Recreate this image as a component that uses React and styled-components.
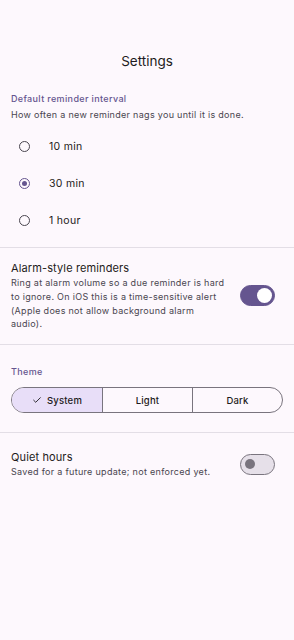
import React, { useState } from 'react'
import styled, { createGlobalStyle } from 'styled-components'

const GlobalStyle = createGlobalStyle`
  html, body {
    margin: 0;
    padding: 0;
    background: #fdf8fd;
  }
  body {
    font-family: Inter, "Liberation Sans", sans-serif;
    color: #1d1b20;
  }
`

const intervals = ['10 min', '30 min', '1 hour']
const themes = ['System', 'Light', 'Dark']

const App = () => {
  const [interval, setInterval] = useState('30 min')
  const [alarm, setAlarm] = useState(true)
  const [theme, setTheme] = useState('System')
  const [quiet, setQuiet] = useState(false)

  return (
    <Page>
      <GlobalStyle />
      <Header>Settings</Header>

      <Section $top={6} $bottom={8}>
        <SectionLabel>Default reminder interval</SectionLabel>
        <Hint>How often a new reminder nags you until it is done.</Hint>
        <RadioList>
          {intervals.map((item) => (
            <RadioRow key={item} onClick={() => setInterval(item)}>
              <RadioCircle $checked={interval === item} />
              <RadioText>{item}</RadioText>
            </RadioRow>
          ))}
        </RadioList>
      </Section>

      <Divider />

      <Section $top={12} $bottom={13}>
        <SwitchRow>
          <SwitchText>
            <RowTitle>Alarm-style reminders</RowTitle>
            <RowDesc>
              Ring at alarm volume so a due reminder is hard to ignore. On iOS this is a
              time-sensitive alert (Apple does not allow background alarm audio).
            </RowDesc>
          </SwitchText>
          <Toggle $on={alarm} onClick={() => setAlarm(!alarm)}>
            <Thumb $on={alarm} />
          </Toggle>
        </SwitchRow>
      </Section>

      <Divider />

      <Section $top={20} $bottom={19}>
        <SectionLabel>Theme</SectionLabel>
        <Segmented>
          {themes.map((t) => (
            <Segment key={t} $active={theme === t} onClick={() => setTheme(t)}>
              {theme === t && (
                <svg width="10" height="10" viewBox="0 0 24 24" fill="none">
                  <path d="M4 12.5l5 5L20 6.5" stroke="#1d1b20" strokeWidth="2.2" strokeLinecap="round" strokeLinejoin="round" />
                </svg>
              )}
              {t}
            </Segment>
          ))}
        </Segmented>
      </Section>

      <Divider />

      <Section $top={16} $bottom={20}>
        <SwitchRow>
          <SwitchText>
            <RowTitle>Quiet hours</RowTitle>
            <RowDesc>Saved for a future update; not enforced yet.</RowDesc>
          </SwitchText>
          <Toggle $on={quiet} onClick={() => setQuiet(!quiet)}>
            <Thumb $on={quiet} />
          </Toggle>
        </SwitchRow>
      </Section>
    </Page>
  )
}

const Page = styled.div`
  width: 294px;
  min-height: 640px;
  background: #fdf8fd;
`

const Header = styled.div`
  padding: 50px 0 14px;
  text-align: center;
  font-size: 13.5px;
  line-height: 22px;
  color: #1d1b20;
`

const Section = styled.div`
  padding: ${(p) => p.$top}px 19px ${(p) => p.$bottom}px 11px;
`

const SectionLabel = styled.div`
  font-size: 9px;
  line-height: 14px;
  font-weight: 500;
  letter-spacing: 0.36px;
  color: #65558f;
  margin-bottom: 2px;
`

const Hint = styled.div`
  font-size: 9px;
  line-height: 14px;
  letter-spacing: 0.3px;
  color: #49454f;
  white-space: nowrap;
`

const RadioList = styled.div`
  display: flex;
  flex-direction: column;
  margin-top: 6px;
`

const RadioRow = styled.div`
  display: flex;
  align-items: center;
  height: 37px;
  cursor: pointer;
`

const RadioCircle = styled.div`
  box-sizing: border-box;
  width: 11px;
  height: 11px;
  margin-left: 8px;
  border-radius: 50%;
  border: 1.5px solid ${(p) => (p.$checked ? '#65558f' : '#49454f')};
  display: flex;
  align-items: center;
  justify-content: center;

  &::after {
    content: '';
    width: 5px;
    height: 5px;
    border-radius: 50%;
    background: #65558f;
    display: ${(p) => (p.$checked ? 'block' : 'none')};
  }
`

const RadioText = styled.span`
  margin-left: 19px;
  font-size: 10.5px;
  letter-spacing: 0.3px;
  color: #1d1b20;
`

const Divider = styled.div`
  height: 1px;
  background: #e3dee6;
`

const SwitchRow = styled.div`
  display: flex;
  align-items: center;
  justify-content: space-between;
`

const SwitchText = styled.div`
  width: 215px;
`

const RowTitle = styled.div`
  font-size: 11px;
  line-height: 16px;
  letter-spacing: 0.12px;
  color: #1d1b20;
`

const RowDesc = styled.div`
  font-size: 9px;
  line-height: 13.8px;
  letter-spacing: 0.3px;
  color: #49454f;
`

const Toggle = styled.div`
  box-sizing: border-box;
  width: 35px;
  height: 21px;
  border-radius: 11px;
  background: ${(p) => (p.$on ? '#65558f' : '#e6e0e9')};
  border: 1.5px solid ${(p) => (p.$on ? '#65558f' : '#79747e')};
  display: flex;
  align-items: center;
  justify-content: ${(p) => (p.$on ? 'flex-end' : 'flex-start')};
  padding: 0 ${(p) => (p.$on ? '2px' : '4px')};
  cursor: pointer;
  flex-shrink: 0;
`

const Thumb = styled.div`
  width: ${(p) => (p.$on ? '15px' : '10px')};
  height: ${(p) => (p.$on ? '15px' : '10px')};
  border-radius: 50%;
  background: ${(p) => (p.$on ? '#ffffff' : '#79747e')};
`

const Segmented = styled.div`
  margin-top: 8px;
  display: grid;
  grid-template-columns: 1fr 1fr 1fr;
  height: 26px;
  box-sizing: border-box;
  border: 1px solid #79747e;
  border-radius: 13px;
  overflow: hidden;
  margin-right: -8px;
`

const Segment = styled.div`
  display: flex;
  align-items: center;
  justify-content: center;
  gap: 5px;
  font-size: 9.5px;
  font-weight: 500;
  letter-spacing: 0.2px;
  color: #1d1b20;
  background: ${(p) => (p.$active ? '#e8def8' : 'transparent')};
  cursor: pointer;

  & + & {
    border-left: 1px solid #79747e;
  }
`

export default App
